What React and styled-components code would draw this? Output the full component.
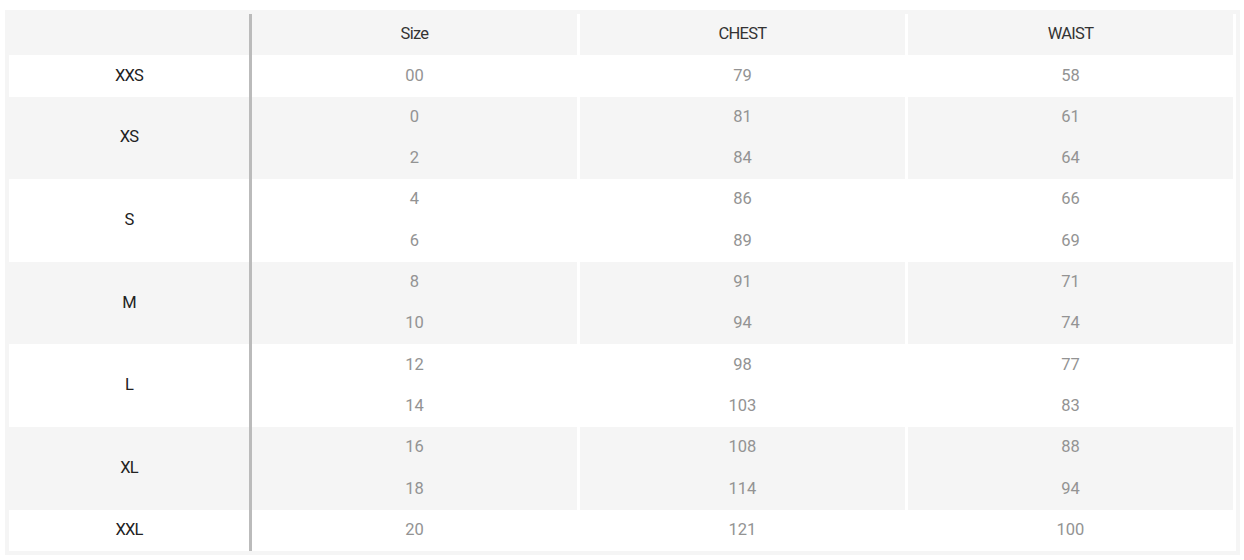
import React from 'react';
import styled, { createGlobalStyle } from 'styled-components';

const sizes = [
  { label: 'XXS', rows: [['00', '79', '58']] },
  { label: 'XS', rows: [['0', '81', '61'], ['2', '84', '64']] },
  { label: 'S', rows: [['4', '86', '66'], ['6', '89', '69']] },
  { label: 'M', rows: [['8', '91', '71'], ['10', '94', '74']] },
  { label: 'L', rows: [['12', '98', '77'], ['14', '103', '83']] },
  { label: 'XL', rows: [['16', '108', '88'], ['18', '114', '94']] },
  { label: 'XXL', rows: [['20', '121', '100']] },
];

const SizeChart = () => {
  return (
    <ChartWrap>
      <ChartTable>
        <colgroup>
          <col style={{ width: 243 }} />
          <col style={{ width: 328 }} />
          <col style={{ width: 328 }} />
          <col style={{ width: 328 }} />
        </colgroup>
        <thead>
          <ChartRow $shaded>
            <LabelCell as='th'></LabelCell>
            <HeadCell>Size</HeadCell>
            <HeadCell>CHEST</HeadCell>
            <HeadCell>WAIST</HeadCell>
          </ChartRow>
        </thead>
        <tbody>
          {sizes.map((group, gi) =>
            group.rows.map((row, ri) => (
              <ChartRow key={group.label + ri} $shaded={gi % 2 === 1}>
                {ri === 0 && (
                  <LabelCell rowSpan={group.rows.length}>{group.label}</LabelCell>
                )}
                {row.map((value, ci) => (
                  <ValueCell key={ci}>{value}</ValueCell>
                ))}
              </ChartRow>
            ))
          )}
        </tbody>
      </ChartTable>
    </ChartWrap>
  );
};

export default function App() {
  return (
    <>
      <GlobalStyle />
      <SizeChart />
    </>
  );
}

const GlobalStyle = createGlobalStyle`
  body {
    margin: 0;
    background: #fff;
    font-family: Roboto, 'Liberation Sans', Arial, sans-serif;
  }
`;

const ChartWrap = styled.div`
  margin: 10px 4px 0 5px;
  width: 1235px;
  padding: 4px;
  box-sizing: border-box;
  background-color: #f5f5f5;
`;

const ChartTable = styled.table`
  width: 1227px;
  table-layout: fixed;
  border-collapse: separate;
  border-spacing: 0;
  font-size: 16.5px;
`;

const ChartRow = styled.tr`
  background-color: ${(p) => (p.$shaded ? '#f5f5f5' : '#fff')};
`;

const BaseCell = styled.td`
  height: 41.3px;
  padding: 0 0 1px;
  box-sizing: border-box;
  text-align: center;
  vertical-align: middle;
  font-weight: 400;
  line-height: 1.2;
  border-right: 3px solid #fff;
`;

const LabelCell = styled(BaseCell)`
  color: #222;
  letter-spacing: -0.8px;
  border-right: 3px solid #bbb;
`;

const HeadCell = styled(BaseCell).attrs({ as: 'th' })`
  color: #333;
  letter-spacing: -0.7px;
`;

const ValueCell = styled(BaseCell)`
  color: #939393;
`;
